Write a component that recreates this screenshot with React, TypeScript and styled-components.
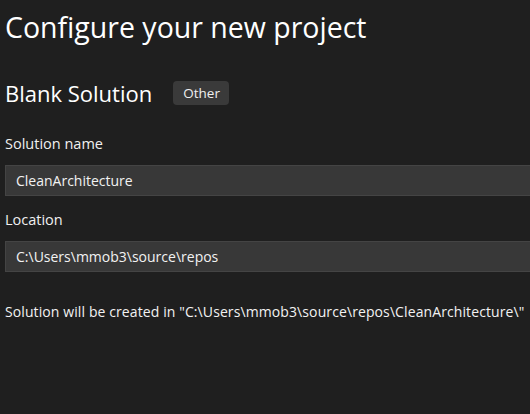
import React from "react";
import styled, { createGlobalStyle } from "styled-components";

const Global = createGlobalStyle`
  html, body { margin: 0; padding: 0; background: #1f1f1f; overflow: hidden; }
  body { font-family: "Open Sans", "Noto Sans", sans-serif; color: #f2f2f2; }
`;

const Page = styled.div`
  width: 530px;
  height: 414px;
  box-sizing: border-box;
  padding: 9px 0 0 5px;
  display: flex;
  flex-direction: column;
  overflow: hidden;
`;

const Title = styled.h1`
  margin: 0;
  font-size: 28.5px;
  line-height: 36px;
  font-weight: 400;
  color: #ffffff;
  white-space: nowrap;
`;

const SubRow = styled.div`
  margin-top: 36px;
  display: flex;
  align-items: center;
  height: 24px;
  gap: 21px;
`;

const SubTitle = styled.h2`
  margin: 0;
  font-size: 22px;
  line-height: 24px;
  font-weight: 400;
  color: #ffffff;
`;

const Tag = styled.span`
  height: 24px;
  box-sizing: border-box;
  padding: 0 9px 0 10px;
  display: inline-flex;
  align-items: center;
  background: #3a3a3a;
  border-radius: 4px;
  font-size: 13.5px;
  color: #f0f0f0;
`;

const Label = styled.label<{ $gap: number }>`
  display: block;
  margin-top: ${(p) => p.$gap}px;
  font-size: 14.5px;
  line-height: 20px;
  color: #f0f0f0;
`;

const Field = styled.div`
  margin-top: 11px;
  width: 560px;
  height: 31px;
  box-sizing: border-box;
  border: 1px solid #444444;
  background: #383838;
  padding: 0 10px;
  font-size: 14px;
  line-height: 29px;
  color: #f2f2f2;
  white-space: nowrap;
`;

const Note = styled.p`
  margin: 30px 0 0;
  font-size: 14px;
  line-height: 20px;
  letter-spacing: 0.1px;
  color: #f2f2f2;
  white-space: nowrap;
`;

export default function App() {
  return (
    <>
      <Global />
      <Page>
        <Title>Configure your new project</Title>
        <SubRow>
          <SubTitle>Blank Solution</SubTitle>
          <Tag>Other</Tag>
        </SubRow>
        <Label $gap={29}>Solution name</Label>
        <Field>CleanArchitecture</Field>
        <Label $gap={14}>Location</Label>
        <Field>C:\Users\mmob3\source\repos</Field>
        <Note>Solution will be created in "C:\Users\mmob3\source\repos\CleanArchitecture\"</Note>
      </Page>
    </>
  );
}
